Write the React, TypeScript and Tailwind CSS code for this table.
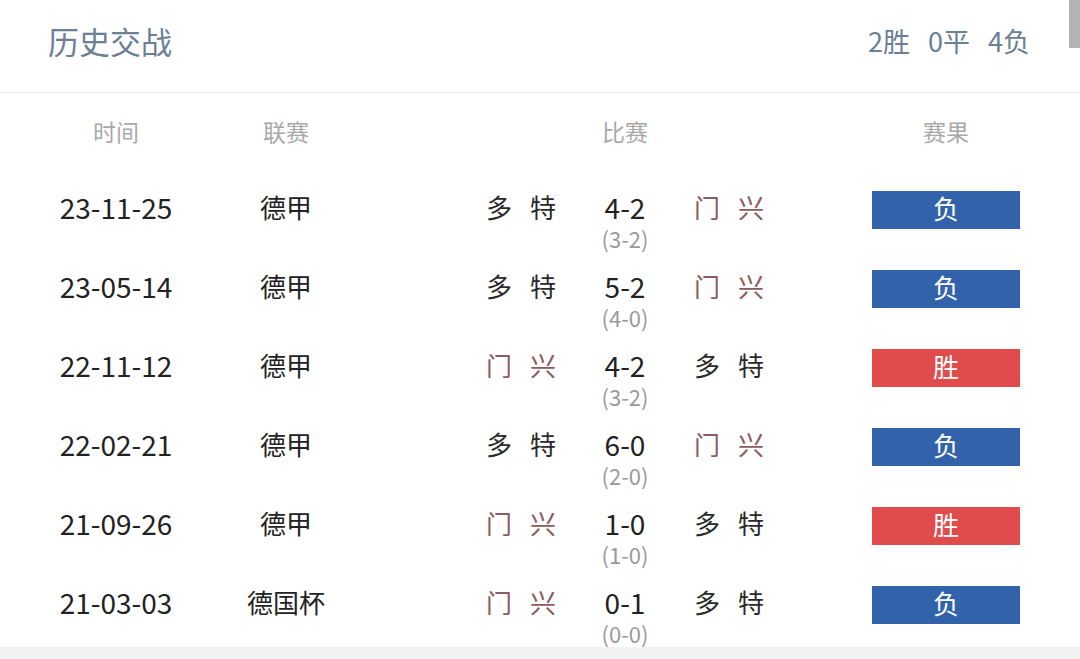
import React from "react";

type Match = {
  date: string;
  league: string;
  home: string;
  away: string;
  score: string;
  half: string;
  result: "胜" | "负";
};

const matches: Match[] = [
  { date: "23-11-25", league: "德甲", home: "多特", away: "门兴", score: "4-2", half: "(3-2)", result: "负" },
  { date: "23-05-14", league: "德甲", home: "多特", away: "门兴", score: "5-2", half: "(4-0)", result: "负" },
  { date: "22-11-12", league: "德甲", home: "门兴", away: "多特", score: "4-2", half: "(3-2)", result: "胜" },
  { date: "22-02-21", league: "德甲", home: "多特", away: "门兴", score: "6-0", half: "(2-0)", result: "负" },
  { date: "21-09-26", league: "德甲", home: "门兴", away: "多特", score: "1-0", half: "(1-0)", result: "胜" },
  { date: "21-03-03", league: "德国杯", home: "门兴", away: "多特", score: "0-1", half: "(0-0)", result: "负" },
];

function Team({ name }: { name: string }) {
  const ours = name === "门兴";
  return (
    <div
      className={`flex w-[104px] justify-center gap-[18px] text-[26px] leading-[30px] ${
        ours ? "text-[#8d5a62]" : "text-[#2a2a2a]"
      }`}
    >
      {name.split("").map((c, i) => (
        <span key={i}>{c}</span>
      ))}
    </div>
  );
}

export default function App() {
  return (
    <div
      className="relative flex h-[659px] w-[1080px] flex-col overflow-hidden bg-white"
      style={{ fontFamily: '"Noto Sans CJK SC", "Noto Sans", sans-serif' }}
    >
      <header className="flex h-[93px] items-center justify-between border-b border-[#ececec] pb-[12px] pl-[48px] pr-[50px]">
        <h1 className="text-[31px] leading-none text-[#6b7f95]">历史交战</h1>
        <div className="flex gap-[18px] text-[27px] leading-none text-[#6b7f95]">
          <span>2胜</span>
          <span>0平</span>
          <span>4负</span>
        </div>
      </header>
      <div className="absolute right-0 top-0 h-[48px] w-[11px] bg-[#b3b3b3]" />

      <div className="flex h-[77px] items-center text-[23px] text-[#a9a9a9]">
        <div className="w-[232px] text-center">时间</div>
        <div className="w-[108px] text-center">联赛</div>
        <div className="w-[233px]" />
        <div className="w-[104px] text-center">比赛</div>
        <div className="w-[195px]" />
        <div className="w-[148px] text-center">赛果</div>
      </div>

      {matches.map((m, i) => (
        <div key={i} className="flex h-[79px] items-start pt-[22px]">
          <div className="w-[232px] text-center text-[28px] leading-[30px] text-[#222]">{m.date}</div>
          <div className="w-[108px] text-center text-[26px] leading-[30px] text-[#222]">{m.league}</div>
          <div className="w-[129px]" />
          <Team name={m.home} />
          <div className="flex w-[104px] flex-col items-center">
            <span className="text-[28px] leading-[30px] text-[#222]">{m.score}</span>
            <span className="mt-[5px] text-[22px] leading-[22px] text-[#9a9a9a]">{m.half}</span>
          </div>
          <Team name={m.away} />
          <div className="w-[91px]" />
          <div
            className={`-mt-[1px] flex h-[38px] w-[148px] items-center justify-center pb-[5px] text-[26px] leading-none text-white ${
              m.result === "胜" ? "bg-[#e04b4b]" : "bg-[#3263aa]"
            }`}
          >
            {m.result}
          </div>
        </div>
      ))}

      <div className="mt-auto h-[12px] bg-[#f2f2f2]" />
    </div>
  );
}
